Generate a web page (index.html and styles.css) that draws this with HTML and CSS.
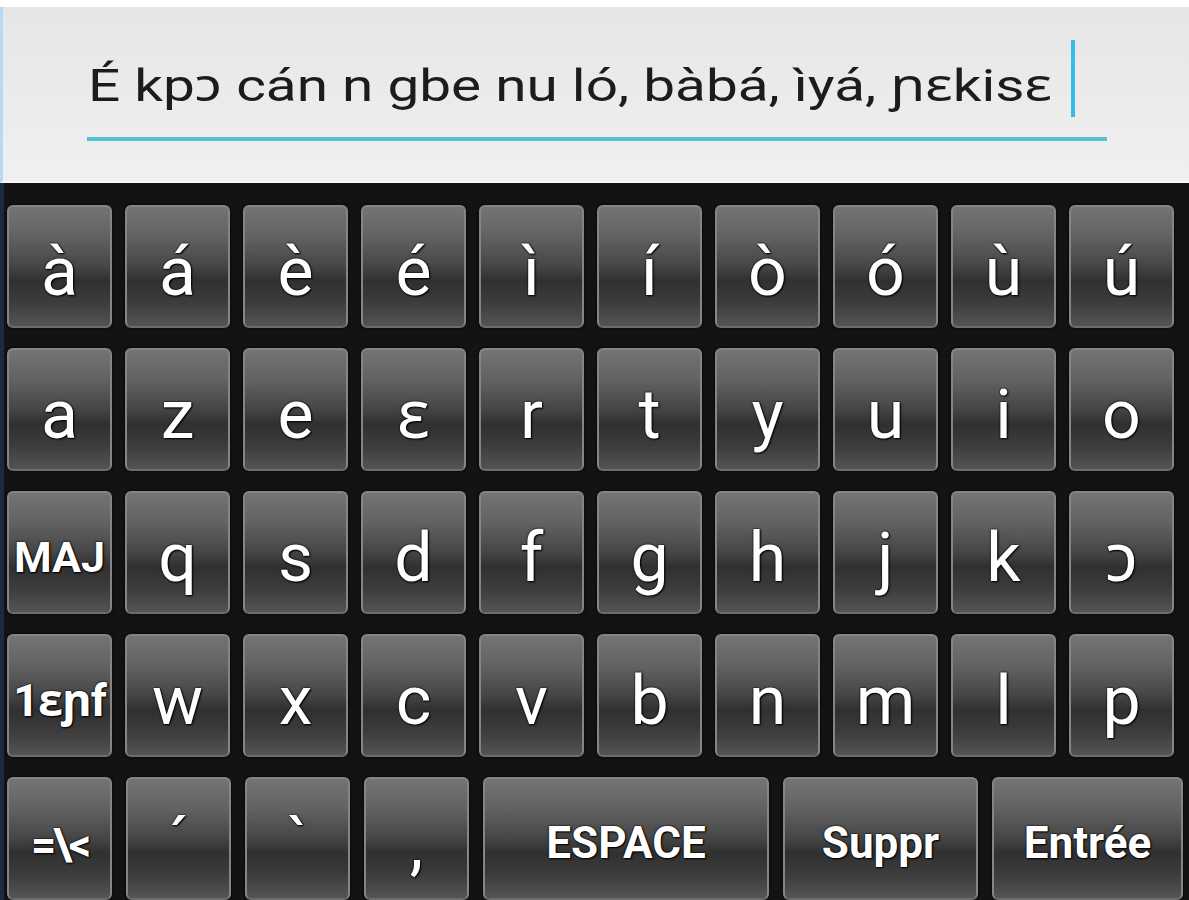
FILE: index.html
```html
<!DOCTYPE html>
<html lang="fr">
<head>
<meta charset="utf-8">
<title>Clavier</title>
<link rel="stylesheet" href="styles.css">
</head>
<body>
<div class="screen">
  <div class="top-strip"></div>
  <div class="input-area">
    <div class="field">
      <span class="field-text">É kpɔ cán n gbe nu ló, bàbá, ìyá, ɲɛkisɛ</span>
      <span class="cursor"></span>
    </div>
  </div>
  <div class="keyboard">
    <div class="row">
      <div class="key accent">à</div>
      <div class="key accent">á</div>
      <div class="key accent">è</div>
      <div class="key accent">é</div>
      <div class="key accent">ì</div>
      <div class="key accent">í</div>
      <div class="key accent">ò</div>
      <div class="key accent">ó</div>
      <div class="key accent">ù</div>
      <div class="key accent">ú</div>
    </div>
    <div class="row">
      <div class="key">a</div>
      <div class="key">z</div>
      <div class="key">e</div>
      <div class="key">ɛ</div>
      <div class="key">r</div>
      <div class="key">t</div>
      <div class="key">y</div>
      <div class="key">u</div>
      <div class="key">i</div>
      <div class="key">o</div>
    </div>
    <div class="row">
      <div class="key label side">MAJ</div>
      <div class="key">q</div>
      <div class="key">s</div>
      <div class="key">d</div>
      <div class="key">f</div>
      <div class="key">g</div>
      <div class="key">h</div>
      <div class="key">j</div>
      <div class="key">k</div>
      <div class="key">ɔ</div>
    </div>
    <div class="row">
      <div class="key label side sym">1ɛɲf</div>
      <div class="key">w</div>
      <div class="key">x</div>
      <div class="key">c</div>
      <div class="key">v</div>
      <div class="key">b</div>
      <div class="key">n</div>
      <div class="key">m</div>
      <div class="key">l</div>
      <div class="key">p</div>
    </div>
    <div class="row bottom">
      <div class="key label side ops">=\&lt;</div>
      <div class="key">´</div>
      <div class="key">`</div>
      <div class="key">,</div>
      <div class="key label space">ESPACE</div>
      <div class="key label del">Suppr</div>
      <div class="key label enter">Entrée</div>
    </div>
  </div>
</div>
</body>
</html>
```
FILE: styles.css
```css
html, body {
  margin: 0;
  padding: 0;
  background: #ffffff;
}

.screen {
  width: 1189px;
  height: 900px;
  overflow: hidden;
  font-family: Roboto, "Noto Sans", "DejaVu Sans", sans-serif;
}

.top-strip {
  height: 7px;
  background: #ffffff;
}

.input-area {
  height: 176px;
  box-sizing: border-box;
  border-left: 3px solid #b5d9f6;
  border-bottom: 2px solid #f6f6f6;
  background: linear-gradient(to bottom, #e6e6e6 0%, #ececec 60%, #f0f0f0 100%);
  padding: 33px 0 0 84px;
}

.field {
  width: 1020px;
  height: 97px;
  border-bottom: 4px solid #55c1d3;
  display: flex;
  align-items: flex-start;
}

.field-text {
  display: inline-block;
  margin-top: 16px;
  margin-left: 1px;
  font-size: 45px;
  line-height: 60px;
  color: #1c1c1c;
  white-space: nowrap;
  transform: scaleX(1.26);
  transform-origin: left center;
}

.cursor {
  flex: none;
  width: 4px;
  height: 77px;
  margin-left: auto;
  margin-right: 32px;
  background: #36bde6;
}

.keyboard {
  height: 717px;
  box-sizing: border-box;
  background: #131313;
  border-left: 4px solid #1b2a3e;
  padding: 22px 0 0 3px;
  display: flex;
  flex-direction: column;
  gap: 20px;
}

.row {
  display: grid;
  grid-template-columns: repeat(10, 105px);
  column-gap: 13px;
  height: 123px;
}

.row.bottom {
  display: flex;
  gap: 14px;
}

.row.bottom .key {
  width: 105px;
  flex: none;
}

.row.bottom .space { width: 286px; }
.row.bottom .del { width: 195px; }
.row.bottom .enter { width: 191px; }

.key {
  box-sizing: border-box;
  height: 123px;
  border-radius: 6px;
  border: 2px solid #858585;
  border-bottom-color: #6c6c6c;
  background: linear-gradient(to bottom,
    #747474 0%,
    #626262 25%,
    #454545 50%,
    #303030 62%,
    #3c3c3c 80%,
    #545454 100%);
  box-shadow: 0 0 3px #000000;
  display: flex;
  align-items: center;
  justify-content: center;
  padding-top: 10px;
  color: #ffffff;
  font-size: 68px;
  line-height: 68px;
  text-shadow: 0 0 2px #000000, 0 0 1px #000000, 1px 1px 2px #000000;
}

.key.label {
  font-weight: 700;
  font-size: 44px;
  line-height: 44px;
  padding-top: 8px;
}

.key.side {
  font-size: 43px;
  line-height: 43px;
  padding-top: 10px;
  white-space: nowrap;
}

.key.sym {
  font-size: 45px;
  letter-spacing: -1px;
}

.key.ops {
  font-size: 44px;
  letter-spacing: -3px;
  padding-top: 14px;
}
```
